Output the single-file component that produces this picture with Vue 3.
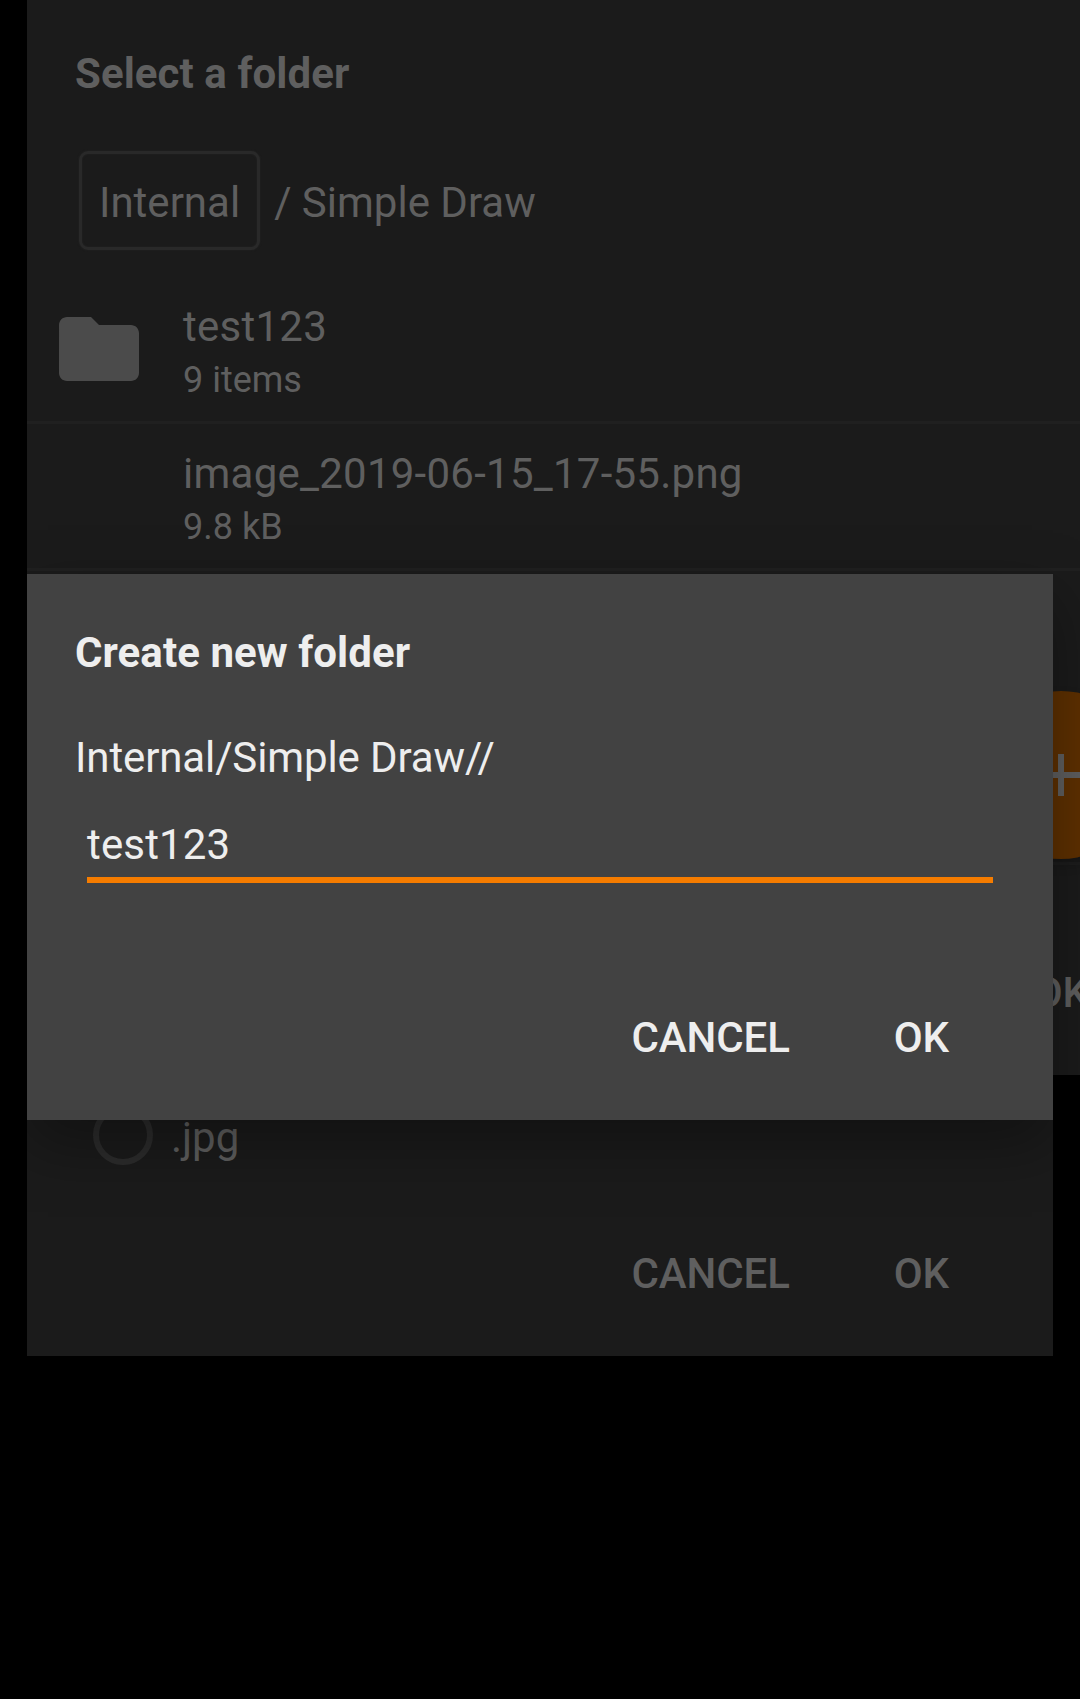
<script setup>
const rows = [
  { name: 'test123', info: '9 items', folder: true },
  { name: 'image_2019-06-15_17-55.png', info: '9.8 kB', folder: false },
  { name: '', info: '', folder: false },
  { name: '', info: '', folder: false },
]
</script>

<template>
  <main class="screen">
    <section class="dialog save">
      <div class="option">
        <span class="radio"></span>
        <span>.jpg</span>
      </div>
      <footer class="actions">
        <span class="action">CANCEL</span>
        <span class="action">OK</span>
      </footer>
    </section>

    <section class="dialog picker">
      <h2 class="title">Select a folder</h2>
      <nav class="crumbs">
        <span class="crumb">Internal</span>
        <span class="current">/ Simple Draw</span>
      </nav>
      <ul class="list">
        <li v-for="(row, i) in rows" :key="i" class="row">
          <div class="thumb">
            <svg v-if="row.folder" viewBox="0 0 24 24" width="96" height="96">
              <path fill="#4b4b4b" d="M10 4H4c-1.1 0-1.99.9-1.99 2L2 18c0 1.1.9 2 2 2h16c1.1 0 2-.9 2-2V8c0-1.1-.9-2-2-2h-8l-2-2z" />
            </svg>
          </div>
          <div class="labels">
            <span class="name">{{ row.name }}</span>
            <span class="info">{{ row.info }}</span>
          </div>
        </li>
      </ul>
      <footer class="actions">
        <span class="action">OK</span>
      </footer>
      <div class="fab">
        <svg viewBox="0 0 24 24" width="72" height="72">
          <path fill="#5f5f5f" d="M19 13h-6v6h-2v-6H5v-2h6V5h2v6h6v2z" />
        </svg>
      </div>
    </section>

    <section class="dialog create">
      <h2 class="title">Create new folder</h2>
      <p class="path">Internal/Simple Draw//</p>
      <div class="field">test123</div>
      <footer class="actions">
        <span class="action">CANCEL</span>
        <span class="action">OK</span>
      </footer>
    </section>
  </main>
</template>

<style>
body {
  margin: 0;
  background: #000;
}
</style>

<style scoped>
.screen {
  position: relative;
  width: 1080px;
  height: 1699px;
  overflow: hidden;
  background: #000;
  color: #5f5f5f;
  font: 400 42px/49px Roboto, sans-serif;
}
.dialog {
  position: absolute;
  left: 27px;
  box-sizing: border-box;
  display: flex;
  flex-direction: column;
  background: #1b1b1b;
}
.title {
  margin: 0;
  padding-left: 48px;
  font: 700 42px/49px Roboto, sans-serif;
  letter-spacing: 0.07px;
}
.actions {
  display: flex;
  justify-content: flex-end;
  gap: 104px;
  margin-top: auto;
  padding: 0 104px 58px 0;
  font-weight: 500;
  letter-spacing: -0.1px;
}

.save {
  top: 1075px;
  width: 1026px;
  height: 281px;
}
.option {
  display: flex;
  gap: 18px;
  padding: 38px 0 0 66px;
}
.radio {
  box-sizing: border-box;
  width: 60px;
  height: 60px;
  margin-top: -8px;
  border: 6px solid #2c2c2c;
  border-radius: 50%;
}

.picker {
  top: 0;
  width: 1166px;
  height: 1075px;
  padding-top: 49px;
}
.crumbs {
  display: flex;
  align-items: flex-start;
  gap: 14px;
  height: 99px;
  margin: 53px 0 27px 52px;
}
.crumb {
  box-sizing: border-box;
  height: 99px;
  padding: 24px 17px;
  border: 3px solid #292929;
  border-radius: 9px;
  box-shadow: 0 0 2px #262626, inset 0 0 2px #262626;
}
.current {
  padding-top: 27px;
}
.list {
  margin: 0;
  padding: 0;
  list-style: none;
}
.row {
  display: flex;
  box-sizing: border-box;
  height: 147px;
  padding: 24px 0 0 24px;
  border-bottom: 3px solid #202020;
}
.thumb {
  width: 132px;
  height: 96px;
}
.labels {
  display: flex;
  flex-direction: column;
  gap: 8px;
  padding-top: 1px;
}
.name {
  letter-spacing: 0.25px;
}
.info {
  font-size: 36px;
  line-height: 42px;
}
.fab {
  position: absolute;
  top: 691px;
  left: 950px;
  display: flex;
  align-items: center;
  justify-content: center;
  width: 168px;
  height: 168px;
  border-radius: 50%;
  background: #5e3000;
  box-shadow: 0 6px 12px rgba(0, 0, 0, 0.2);
}

.create {
  top: 574px;
  width: 1026px;
  height: 546px;
  padding-top: 54px;
  background: #424242;
  color: #eee;
  box-shadow: 0 24px 60px rgba(0, 0, 0, 0.35);
}
.path {
  margin: 56px 0 0 48px;
  letter-spacing: -0.12px;
}
.field {
  margin: 38px 60px 0;
  padding-bottom: 8px;
  border-bottom: 6px solid #f57c00;
  letter-spacing: 0.15px;
}
</style>
